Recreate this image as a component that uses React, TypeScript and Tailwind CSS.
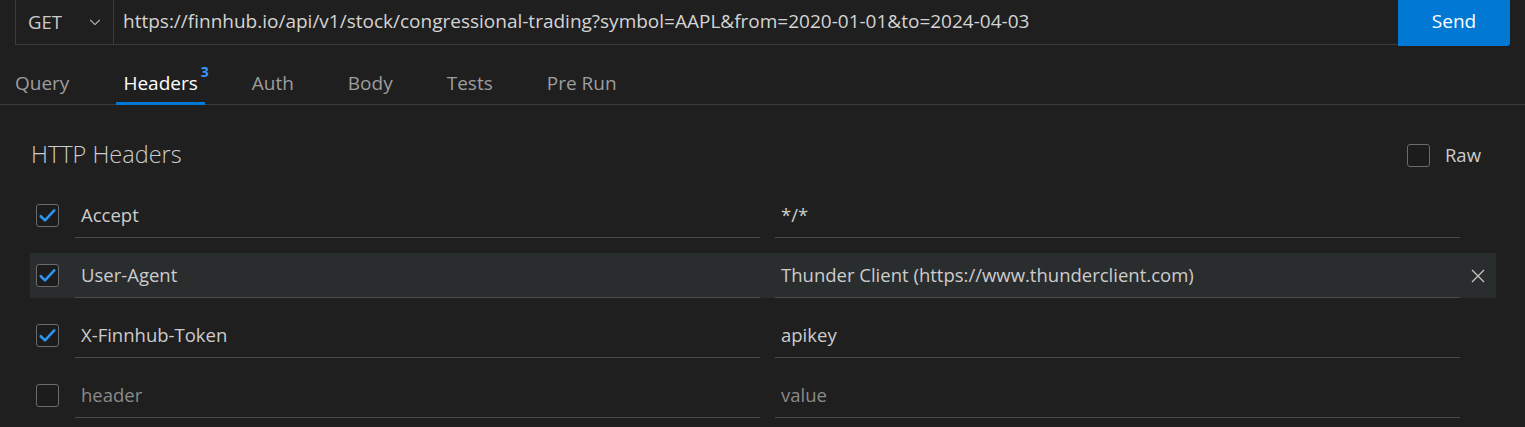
import React, { useState } from 'react';

type HeaderRow = {
  key: string;
  value: string;
  checked: boolean;
};

const TABS = ['Query', 'Headers', 'Auth', 'Body', 'Tests', 'Pre Run'];

const INITIAL_ROWS: HeaderRow[] = [
  { key: 'Accept', value: '*/*', checked: true },
  { key: 'User-Agent', value: 'Thunder Client (https://www.thunderclient.com)', checked: true },
  { key: 'X-Finnhub-Token', value: 'apikey', checked: true },
  { key: '', value: '', checked: false },
];

const CheckBox = ({ checked, onClick }: { checked: boolean; onClick?: () => void }) => (
  <button
    type="button"
    onClick={onClick}
    className="flex h-[23px] w-[23px] shrink-0 items-center justify-center rounded-[3px] border border-[#6b6b6b] bg-[#1c1c1c]"
  >
    {checked && (
      <svg width="19" height="19" viewBox="0 0 16 16" fill="none">
        <path d="M2.3 8.6l3.6 3.5 7.8-8.4" stroke="#2f93f0" strokeWidth="2.2" strokeLinecap="round" strokeLinejoin="round" />
      </svg>
    )}
  </button>
);

export default function App() {
  const [rows, setRows] = useState<HeaderRow[]>(INITIAL_ROWS);
  const [hovered, setHovered] = useState<number>(1);
  const [raw, setRaw] = useState(false);

  const toggle = (i: number) =>
    setRows(prev => prev.map((r, idx) => (idx === i ? { ...r, checked: !r.checked } : r)));

  return (
    <div className="h-[427px] w-full overflow-hidden bg-[#1f1f1f] text-[#cccccc]" style={{ fontFamily: '"Open Sans", "Noto Sans", sans-serif' }}>
      {/* request bar */}
      <div className="flex h-[45px] pl-[15px] pr-[15px]">
        <div className="flex flex-1 border-b border-l border-[#3c3c3c]">
          <div className="flex w-[98px] items-center justify-between border-r border-[#3c3c3c] pl-[12px] pr-[11px]">
            <span className="text-[18.5px] text-[#cccccc]">GET</span>
            <svg width="14" height="14" viewBox="0 0 16 16" fill="none">
              <path d="M2.5 5.5l5.5 5.5 5.5-5.5" stroke="#c5c5c5" strokeWidth="1.2" />
            </svg>
          </div>
          <div className="flex flex-1 items-center pb-[2px] pl-[9px] text-[19px] text-[#d4d4d4]">
            https://finnhub.io/api/v1/stock/congressional-trading?symbol=AAPL&amp;from=2020-01-01&amp;to=2024-04-03
          </div>
        </div>
        <button className="-mb-px flex w-[112px] items-center justify-center rounded-br-[3px] bg-[#0078d4] pb-[4px] text-[19px] text-white">
          Send
        </button>
      </div>

      {/* tabs */}
      <div className="flex h-[60px] items-end gap-[40px] border-b border-[#3c3c3c] pl-[8px]">
        {TABS.map(tab => {
          const active = tab === 'Headers';
          return (
            <div
              key={tab}
              className={`relative -mb-px flex h-[41px] items-start px-[7px] pt-[5px] text-[19px] ${
                active ? 'border-b-[3px] border-[#0078d4] text-white' : 'text-[#9d9d9d]'
              }`}
            >
              {tab}
              {active && (
                <span className="absolute right-[-4px] top-[-3px] text-[14px] font-bold text-[#3794ff]">3</span>
              )}
            </div>
          );
        })}
      </div>

      {/* headers panel */}
      <div className="pl-[30px] pr-[29px]">
        <div className="flex h-[88px] items-center justify-between pl-[1px] pr-[15px] pt-[12px]">
          <span className="text-[23.5px] font-light text-[#cccccc]">HTTP Headers</span>
          <div className="flex items-center gap-[15px]">
            <CheckBox checked={raw} onClick={() => setRaw(!raw)} />
            <span className="text-[18.5px] text-[#cccccc]">Raw</span>
          </div>
        </div>

        <div className="flex flex-col gap-[15px]">
          {rows.map((row, i) => (
            <div
              key={i}
              onMouseEnter={() => setHovered(i)}
              className={`flex h-[45px] items-stretch pl-[6px] ${hovered === i ? 'bg-[#2a2d2e]' : ''}`}
            >
              <div className="flex items-center">
                <CheckBox checked={row.checked} onClick={() => toggle(i)} />
              </div>
              <div className="ml-[16px] flex flex-1 items-center border-b border-[#4a4a4a] pl-[6px] text-[18.5px]">
                {row.key ? <span className="text-[#cccccc]">{row.key}</span> : <span className="text-[#8a8a8a]">header</span>}
              </div>
              <div className="ml-[15px] flex flex-1 items-center border-b border-[#4a4a4a] pl-[6px] text-[18.5px]">
                {row.value ? <span className="text-[#cccccc]">{row.value}</span> : <span className="text-[#8a8a8a]">value</span>}
              </div>
              <div className="flex w-[36px] items-center justify-center">
                {hovered === i && row.key && (
                  <svg width="14" height="14" viewBox="0 0 14 14" fill="none">
                    <path d="M1 1l12 12M13 1L1 13" stroke="#c5c5c5" strokeWidth="1.3" />
                  </svg>
                )}
              </div>
            </div>
          ))}
        </div>
      </div>
    </div>
  );
}
